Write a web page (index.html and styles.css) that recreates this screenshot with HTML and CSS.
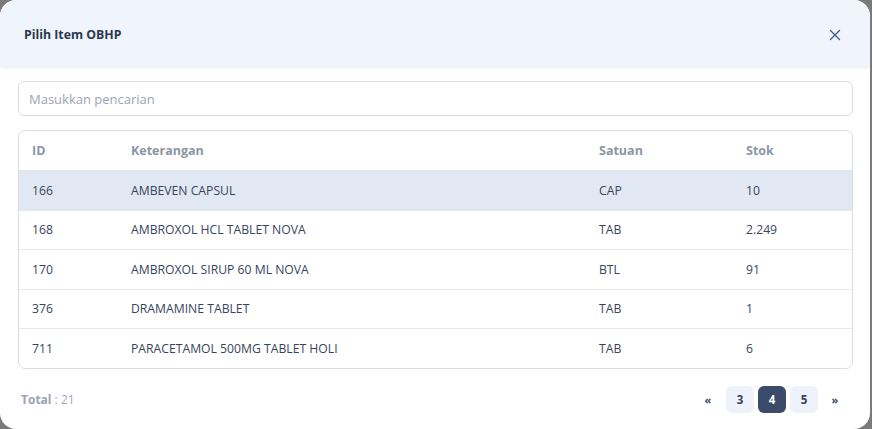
FILE: index.html
```html
<!DOCTYPE html>
<html lang="id">
<head>
<meta charset="utf-8">
<title>Pilih Item OBHP</title>
<link rel="stylesheet" href="styles.css">
</head>
<body>
<div class="modal">
  <header class="modal-head">
    <h2 class="modal-title">Pilih Item OBHP</h2>
    <button class="close" aria-label="Tutup">
      <svg width="12" height="12" viewBox="0 0 12 12"><path d="M1.5 1.5 L10.5 10.5 M10.5 1.5 L1.5 10.5" stroke="#3f5f8f" stroke-width="1.4" stroke-linecap="round"/></svg>
    </button>
  </header>
  <div class="modal-body">
    <input class="search" type="text" placeholder="Masukkan pencarian">
    <div class="table-wrap">
      <table class="items">
        <thead>
          <tr><th class="c-id">ID</th><th class="c-ket">Keterangan</th><th class="c-sat">Satuan</th><th class="c-stok">Stok</th></tr>
        </thead>
        <tbody>
          <tr class="selected"><td>166</td><td>AMBEVEN CAPSUL</td><td>CAP</td><td>10</td></tr>
          <tr><td>168</td><td>AMBROXOL HCL TABLET NOVA</td><td>TAB</td><td>2.249</td></tr>
          <tr><td>170</td><td>AMBROXOL SIRUP 60 ML NOVA</td><td>BTL</td><td>91</td></tr>
          <tr><td>376</td><td>DRAMAMINE TABLET</td><td>TAB</td><td>1</td></tr>
          <tr><td>711</td><td>PARACETAMOL 500MG TABLET HOLI</td><td>TAB</td><td>6</td></tr>
        </tbody>
      </table>
    </div>
    <div class="foot">
      <div class="total"><b>Total</b> : 21</div>
      <nav class="pager">
        <span class="arrow prev">&laquo;</span>
        <span class="page">3</span>
        <span class="page active">4</span>
        <span class="page">5</span>
        <span class="arrow next">&raquo;</span>
      </nav>
    </div>
  </div>
</div>
</body>
</html>
```
FILE: styles.css
```css
html, body {
  margin: 0;
  height: 100%;
  background: #7a7a7a;
}
body {
  font-family: "Open Sans", "Noto Sans", sans-serif;
  color: #34435e;
}
.modal {
  width: 870px;
  height: 429px;
  background: #fff;
  border-radius: 16px;
  overflow: hidden;
  display: flex;
  flex-direction: column;
}
.modal-head {
  height: 66px;
  flex: none;
  background: #f0f5fd;
  box-shadow: 0 1px 4px rgba(40, 60, 90, 0.12);
  display: flex;
  align-items: center;
  justify-content: space-between;
  padding: 0 24px;
  position: relative;
  z-index: 1;
}
.modal-title {
  margin: 0;
  font-size: 12.3px;
  font-weight: 700;
  color: #2b3850;
  padding-top: 2px;
}
.close {
  border: 0;
  background: none;
  padding: 0;
  width: 12px;
  height: 12px;
  display: flex;
  margin-right: 5px;
  margin-top: 3px;
}
.modal-body {
  padding: 15px 17px 0 18px;
}
.search {
  box-sizing: border-box;
  width: 100%;
  height: 35px;
  border: 1px solid #d8dde4;
  border-radius: 6px;
  padding: 0 10px;
  font-family: inherit;
  font-size: 13px;
  color: #34435e;
  outline: none;
}
.search::placeholder {
  color: #9ba4b4;
}
.table-wrap {
  margin-top: 14px;
  border: 1px solid #d8dde4;
  border-radius: 7px;
  overflow: hidden;
}
.items {
  width: 100%;
  border-collapse: collapse;
  font-size: 12.2px;
}
.items th {
  text-align: left;
  font-weight: 700;
  color: #8c95a6;
  font-size: 12.5px;
  height: 39px;
  padding: 0 0 0 13px;
}
.items td {
  height: 38.5px;
  padding: 0 0 0 13px;
  border-top: 1px solid #e6e9ee;
  color: #36445d;
}
.items tbody tr:first-child td {
  border-top-color: #e1e6ee;
}
.items tr.selected td {
  background: #e2e8f3;
}
.c-id { width: 86px; }
.c-ket { width: 455px; }
.c-sat { width: 134px; }
.foot {
  display: flex;
  justify-content: space-between;
  align-items: center;
  margin-top: 17px;
  padding: 0 5px 0 3px;
}
.total {
  font-size: 12px;
  color: #a3abb8;
}
.total b {
  color: #9aa3b1;
}
.pager {
  display: flex;
  align-items: center;
  gap: 4px;
}
.page {
  width: 28px;
  height: 27px;
  border-radius: 6px;
  background: #eef3fb;
  display: flex;
  align-items: center;
  justify-content: center;
  font-size: 11.5px;
  font-weight: 700;
  color: #34435e;
}
.page.active {
  background: #3a4c6a;
  color: #fff;
}
.arrow {
  text-align: center;
  font-size: 11px;
  font-weight: 700;
  color: #3a4c6a;
}
.arrow.prev { width: 28px; }
.arrow.next { width: 26px; }
```
